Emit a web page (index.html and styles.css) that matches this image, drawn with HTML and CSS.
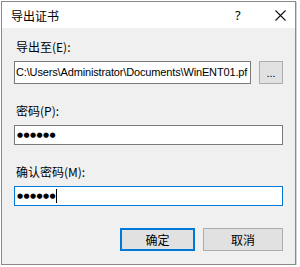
FILE: index.html
```html
<!DOCTYPE html>
<html>
<head>
  <title>导出证书</title>
  <link rel="stylesheet" href="styles.css">
</head>
<body>
  <div class="dialog">
    <div class="titlebar">
      <span class="title">导出证书</span>
      <span class="help">?</span>
      <span class="close">
        <svg width="11" height="11" viewBox="0 0 11 11"><path d="M0.5 0.5 L10.5 10.5 M10.5 0.5 L0.5 10.5" stroke="#111" stroke-width="1.1" fill="none"/></svg>
      </span>
    </div>

    <div class="content">
      <div class="field">
        <label class="label">导出至(E):</label>
        <div class="path-row">
          <div class="input path">C:\Users\Administrator\Documents\WinENT01.pf</div>
          <button class="browse">...</button>
        </div>
      </div>

      <div class="field">
        <label class="label">密码(P):</label>
        <div class="input pw"><span class="dots">&#9679;&#9679;&#9679;&#9679;&#9679;&#9679;</span></div>
      </div>

      <div class="field">
        <label class="label">确认密码(M):</label>
        <div class="input pw focused"><span class="dots">&#9679;&#9679;&#9679;&#9679;&#9679;&#9679;</span><span class="caret"></span></div>
      </div>

      <div class="button-container">
        <button class="btn default">确定</button>
        <button class="btn">取消</button>
      </div>
    </div>
  </div>
</body>
</html>
```

FILE: styles.css
```css
* {
  box-sizing: border-box;
}

body {
  margin: 0;
  background: #fff;
  font-family: "Noto Sans", "Noto Sans CJK SC", sans-serif;
  font-size: 12px;
  color: #000;
}

.dialog {
  margin: 1px 0 0 1px;
  width: 295px;
  height: 264px;
  border: 1px solid #8a8a8a;
  box-shadow: 1px 1px 0 #d0d0d0;
  background: #f0f0f0;
  display: flex;
  flex-direction: column;
}

.titlebar {
  height: 26px;
  flex-shrink: 0;
  background: #fff;
  display: flex;
  align-items: center;
  padding-left: 9px;
}

.title {
  flex: 1;
  font-family: "Noto Sans CJK SC", sans-serif;
  font-size: 12px;
}

.help {
  width: 14px;
  margin-right: 26px;
  font-size: 13px;
}

.close {
  width: 11px;
  margin-right: 9px;
  display: flex;
}

.content {
  flex: 1;
  padding: 11px 12px 0 12px;
  display: flex;
  flex-direction: column;
}

.field {
  margin-bottom: 19px;
}

.label {
  display: block;
  height: 16px;
  line-height: 16px;
  font-family: "Noto Sans CJK SC", sans-serif;
  font-size: 12px;
  padding-left: 2px;
  margin-bottom: 6px;
}

.path-row {
  display: flex;
  align-items: center;
  gap: 8px;
}

.input {
  background: #fff;
  border: 1px solid #7a7a7a;
  height: 20px;
  line-height: 18px;
  padding: 0 2px;
  white-space: nowrap;
  overflow: hidden;
}

.input.path {
  flex: none;
  width: 237px;
  height: 23px;
  line-height: 21px;
  padding: 0 1px;
  font-family: "Liberation Sans", sans-serif;
  font-size: 11px;
  letter-spacing: -0.15px;
}

.browse {
  flex: none;
  width: 24px;
  height: 23px;
  padding: 0;
  background: #e1e1e1;
  border: 1px solid #adadad;
  font-size: 11px;
  line-height: 10px;
}

.pw {
  display: flex;
  align-items: center;
}

.dots {
  font-family: "DejaVu Sans", sans-serif;
  font-size: 7px;
  letter-spacing: 0.4px;
}

.focused {
  border-color: #0078d7;
}

.caret {
  display: inline-block;
  width: 1px;
  height: 14px;
  background: #000;
  margin-left: 0;
}

.button-container {
  display: flex;
  justify-content: flex-end;
  gap: 8px;
  margin-top: 3px;
}

.btn {
  width: 75px;
  height: 23px;
  padding: 0;
  background: #e1e1e1;
  border: 1px solid #adadad;
  font-family: "Noto Sans CJK SC", sans-serif;
  font-size: 12px;
}

.btn.default {
  border: 2px solid #0078d7;
}

.btn + .btn {
  width: 80px;
}
```
